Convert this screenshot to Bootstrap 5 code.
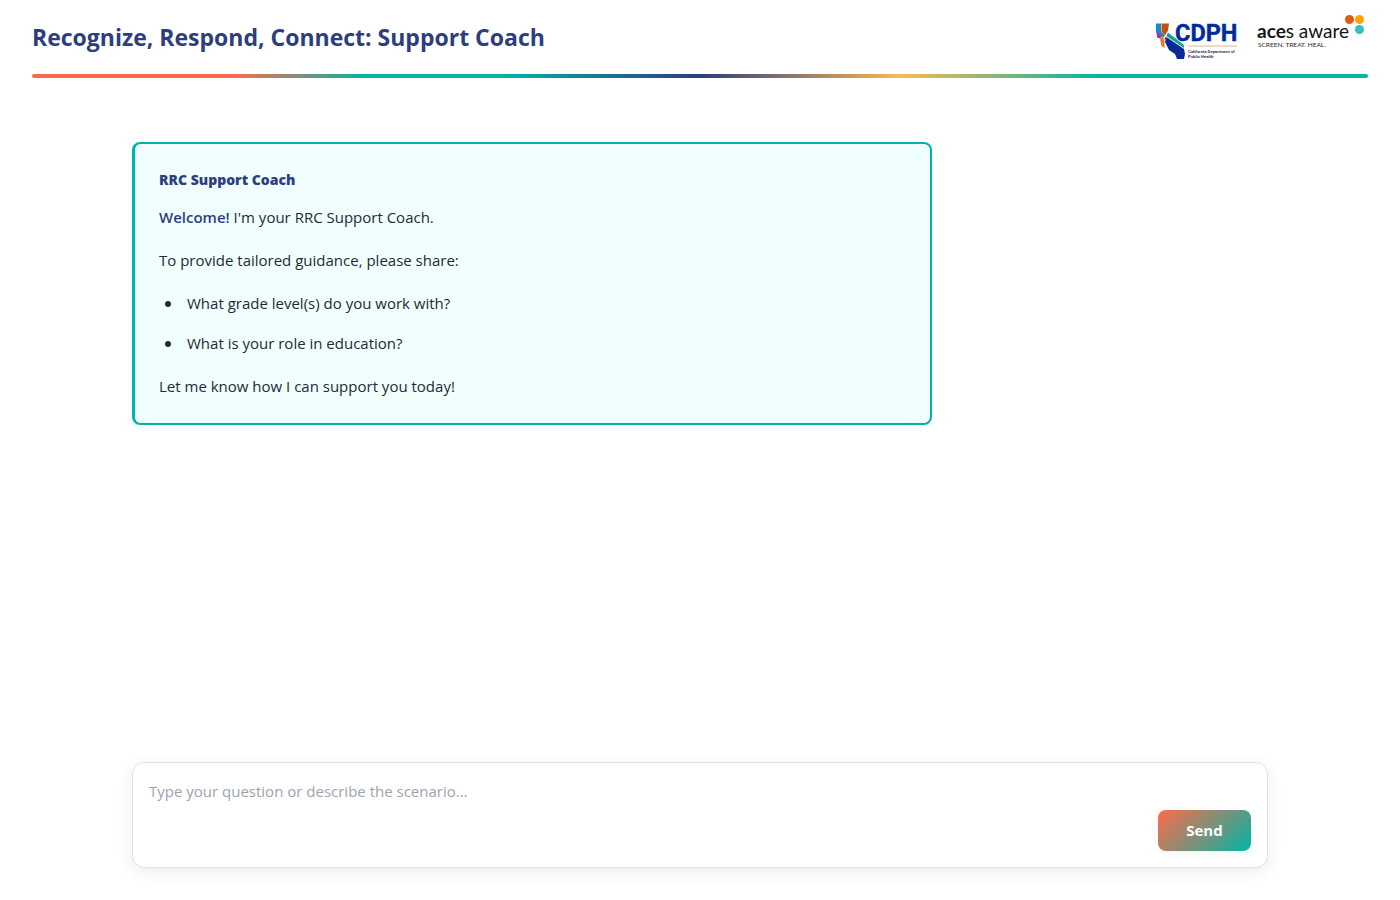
<!DOCTYPE html>
<html lang="en">
<head>
<meta charset="utf-8">
<meta name="viewport" content="width=device-width, initial-scale=1">
<title>RRC Support Coach</title>
<link href="https://cdn.jsdelivr.net/npm/bootstrap@5.3.0/dist/css/bootstrap.min.css" rel="stylesheet">
<style>
  :root { --navy: #2d3e7f; --teal: #00b5a5; --coral: #ff6b4a; --amber: #ffb84d; }
  body { font-family: "Open Sans", "Noto Sans", sans-serif; font-size: 15px; line-height: 27px; color: #1f2937; background: #fff; }
  .site-title { font-size: 23px; line-height: 32px; font-weight: 700; color: var(--navy); }
  .site-head { height: 74px; }
  .rainbow { height: 4px; border-radius: 2px; background: linear-gradient(90deg, var(--coral) 0%, var(--coral) 15%, var(--teal) 25%, var(--teal) 35%, var(--navy) 50%, var(--amber) 65%, var(--teal) 80%, var(--teal) 100%); }
  .chat-wrap { max-width: 1200px; }
  .message { max-width: 800px; background: #f0fffe; border: 2px solid var(--teal); border-left-width: 3px; border-radius: 8px; padding: 24px 24px 23px; }
  .message-author { font-size: 14px; line-height: 24px; font-weight: 800; color: var(--navy); margin-bottom: 12px; }
  .message strong { font-weight: 600; color: var(--navy); }
  .message ul { padding-left: 24px; }
  .message li { padding-left: 4px; }
  .message li::marker { font-size: 16px; }
  .message li + li { margin-top: 13px; }
  .composer { min-height: 106px; border: 1px solid #e0e0e0; border-radius: 12px; padding: 16px; background: #fff; box-shadow: 0 4px 16px rgba(0, 0, 0, .08); }
  .composer textarea { resize: none; outline: 0; line-height: 24px; color: inherit; }
  .composer textarea::placeholder { color: #9ca3af; }
  .btn-send { width: 93px; height: 41px; border: 0; border-radius: 8px; color: #fff; font-size: 15px; font-weight: 700; background: linear-gradient(135deg, var(--coral), var(--teal)); box-shadow: 0 2px 8px rgba(0, 0, 0, .06); }
</style>
</head>
<body class="min-vh-100 d-flex flex-column">
<header class="px-3 mx-3">
  <div class="site-head d-flex align-items-center justify-content-between">
    <h1 class="site-title mb-0">Recognize, Respond, Connect: Support Coach</h1>
    <div class="d-flex align-items-center">
      <svg width="90" height="50" viewBox="1150 12 90 50" role="img" aria-label="California Department of Public Health">
        <path d="M1156 23.500h5v8l4 4-2 2-7-5z" fill="#2386c8"/>
        <path d="M1161.500 23.500h7.500l-1 7-3 5-3.500-4z" fill="#c4500b"/>
        <path d="M1156.500 32l5.500 4-2 2.500-3-1z" fill="#a92a99"/>
        <path d="M1160 38.500l3-2 1.500 4.500v7l-3-2z" fill="#e07a2c"/>
        <path d="M1164.500 38l2-2 1 3-2 2z" fill="#b33c2c"/>
        <path d="M1168 32.500l16 12.500v4l-18-12z" fill="#18a297"/>
        <path d="M1165.500 36l18.500 12.500" fill="none" stroke="#fff" stroke-width="1"/>
        <path d="M1167 37.500l17 11.500 1 5-1 5h-7l-2-5-6-4-4-8z" fill="#0a2b96"/>
        <text x="1175" y="41" font-family="Roboto, sans-serif" font-size="23.500" font-weight="700" fill="#002ba0" stroke="#002ba0" stroke-width=".4">CDPH</text>
        <path d="M1188 46h49" stroke="#d7b98c" stroke-width="1"/>
        <g font-family="Liberation Sans, sans-serif" font-size="4" font-weight="700" fill="#17233f"><text x="1188" y="53">California Department of</text><text x="1188" y="58">Public Health</text></g>
      </svg>
      <svg class="ms-2" width="120" height="50" viewBox="1248 12 120 50" role="img" aria-label="ACEs Aware">
        <text x="1257" y="38" font-family="Lato, sans-serif" font-size="19" fill="#151515"><tspan font-weight="700">ace</tspan><tspan font-weight="400">s aware</tspan></text>
        <text x="1258" y="47" font-family="Lato, sans-serif" font-size="6.500" font-weight="500" fill="#333">SCREEN. TREAT. HEAL.</text>
        <circle cx="1349.500" cy="19.500" r="4.500" fill="#e35a12"/><circle cx="1359.500" cy="19.500" r="4.500" fill="#ffa400"/><circle cx="1359.500" cy="29.500" r="4.500" fill="#2fbfc5"/>
      </svg>
    </div>
  </div>
  <div class="rainbow"></div>
</header>
<main class="chat-wrap w-100 mx-auto flex-grow-1 d-flex flex-column px-3">
  <section class="px-3 pt-5 mt-3 flex-grow-1" aria-label="Conversation">
    <article class="message">
      <h2 class="message-author">RRC Support Coach</h2>
      <p><strong>Welcome!</strong> I'm your RRC Support Coach.</p>
      <p>To provide tailored guidance, please share:</p>
      <ul>
        <li>What grade level(s) do you work with?</li>
        <li>What is your role in education?</li>
      </ul>
      <p class="mb-0">Let me know how I can support you today!</p>
    </article>
  </section>
  <form class="px-3 pb-3 mb-3">
    <div class="composer d-flex align-items-end gap-3">
      <textarea id="question" aria-label="Your question" class="flex-grow-1 align-self-stretch border-0 p-0 bg-transparent" rows="3" placeholder="Type your question or describe the scenario..."></textarea>
      <button type="button" class="btn btn-send">Send</button>
    </div>
  </form>
</main>
<script src="https://cdn.jsdelivr.net/npm/bootstrap@5.3.0/dist/js/bootstrap.bundle.min.js"></script>
</body>
</html>
